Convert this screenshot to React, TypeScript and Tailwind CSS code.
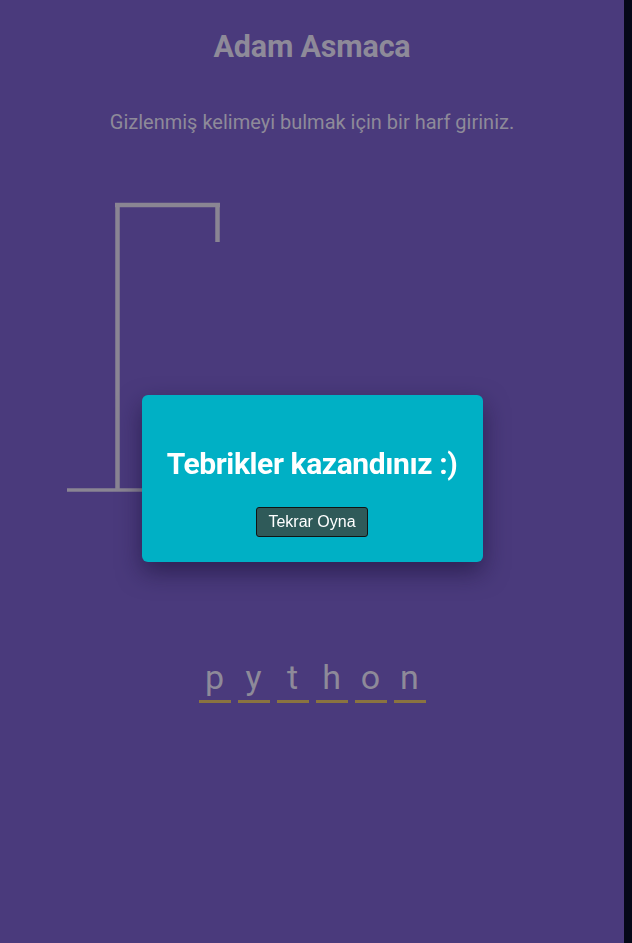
const WORD = ['p', 'y', 't', 'h', 'o', 'n'];

function Gallows() {
  return (
    <svg width="200" height="300" className="ml-[60px] block" fill="none" stroke="#8a8593">
      <line x1="55" y1="10" x2="160" y2="10" strokeWidth="4.5" />
      <line x1="57.5" y1="8" x2="57.5" y2="295" strokeWidth="4.5" />
      <line x1="157.5" y1="8" x2="157.5" y2="47" strokeWidth="4.5" />
      <line x1="7" y1="295" x2="107" y2="295" strokeWidth="3.5" />
    </svg>
  );
}

function WinPopup() {
  return (
    <div className="fixed top-0 left-0 bottom-0 w-[624px] flex items-center justify-center pt-[14px]">
      <div className="w-[341px] h-[167px] rounded-[6px] bg-[#00b0c5] flex flex-col items-center pt-[50px] shadow-[0_10px_24px_rgba(20,12,50,0.55)]">
        <h2 className="text-[30px] leading-[38px] font-bold text-white tracking-[-0.4px]">
          Tebrikler kazandınız :)
        </h2>
        <button
          type="button"
          className="mt-[24px] w-[112px] h-[30px] rounded-[3px] border border-[#101414] bg-[#2f5a59] text-white text-[16px] font-['Liberation_Sans',Arial,sans-serif]"
        >
          Tekrar Oyna
        </button>
      </div>
    </div>
  );
}

export default function App() {
  return (
    <div className="flex h-[943px] w-[632px] overflow-hidden font-['Roboto','Noto_Sans',sans-serif]">
      <div className="w-[624px] h-full bg-[#4a3a7c] flex flex-col items-center text-[#8e8a99]">
        <h1 className="mt-[29px] text-[30.5px] leading-[36px] font-bold tracking-[-0.2px]">Adam Asmaca</h1>
        <p className="mt-[44px] text-[20px] leading-[26px]">
          Gizlenmiş kelimeyi bulmak için bir harf giriniz.
        </p>
        <div className="self-stretch mt-[60px]">
          <Gallows />
        </div>
        <div className="mt-[159px] flex">
          {WORD.map((ch, i) => (
            <span
              key={i}
              className="mx-[3.5px] w-[32px] h-[49px] flex items-center justify-center border-b-[3px] border-[#8a7340] text-[34px] leading-none text-[#8e8a99]"
            >
              {ch}
            </span>
          ))}
        </div>
      </div>
      <div className="w-[8px] h-full bg-[#050818]" />
      <WinPopup />
    </div>
  );
}
